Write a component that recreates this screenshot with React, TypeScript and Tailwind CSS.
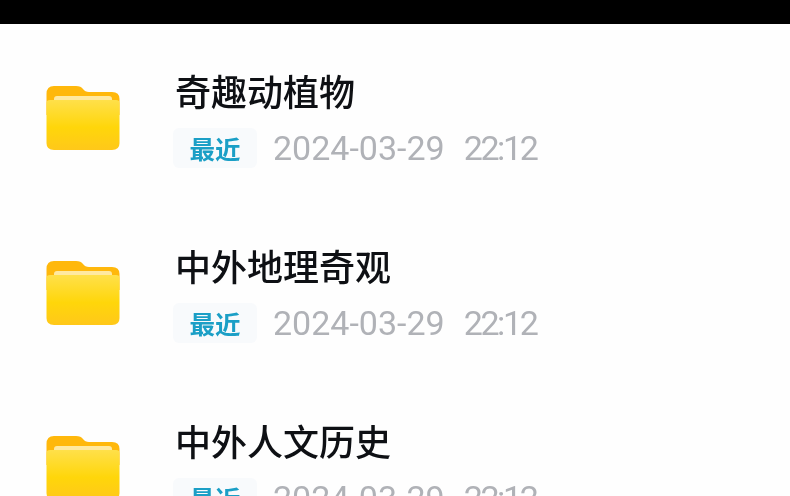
const Folder = ({ id }: { id: string }) => (
  <svg width="74" height="66" viewBox="0 0 74 66" className="shrink-0">
    <defs>
      <linearGradient id={id} x1="0" y1="0" x2="0" y2="1">
        <stop offset="0" stopColor="#ffe04a" />
        <stop offset="0.55" stopColor="#ffd60a" />
        <stop offset="1" stopColor="#ffc81a" />
      </linearGradient>
    </defs>
    <path d="M0.5 9 Q0.5 1 8 1 H30 Q35 1 37 4 Q39 7 43 7 H66 Q73.5 7 73.5 14 V30 H0.5 Z" fill="#ffb80c" />
    <rect x="8" y="11" width="58" height="8" rx="3" fill="#ffe9a0" />
    <path d="M0.5 18 Q0.5 15 4 15 H70 Q73.5 15 73.5 18 V58 Q73.5 65 66 65 H8 Q0.5 65 0.5 58 Z" fill={`url(#${id})`} />
  </svg>
);

const rows = ["奇趣动植物", "中外地理奇观", "中外人文历史"];

export default function App() {
  return (
    <div className="w-[790px] h-[496px] overflow-hidden bg-[#fefefe] flex flex-col" style={{ fontFamily: '"Noto Sans CJK SC", sans-serif' }}>
      <div className="h-[24px] shrink-0 bg-black" />
      <div className="flex flex-col gap-[75px] pt-[42px] blur-[0.6px]">
        {rows.map((title, i) => (
          <div key={title} className="flex h-[100px] shrink-0">
            <div className="pl-[46px] w-[175px] pt-[19px] shrink-0">
              <Folder id={`folder-${i}`} />
            </div>
            <div className="flex flex-col">
              <div className="h-[60px] shrink-0 -mt-[2px] text-[36px] leading-[52px] font-medium text-[#0e1014] whitespace-nowrap">{title}</div>
              <div className="flex items-center h-[40px] shrink-0 mt-[4px]">
                <div className="w-[84px] h-[40px] -ml-[2px] rounded-[6px] bg-[#f8fafc] flex items-center justify-center text-[25.5px] font-bold text-[#1b9fc6]">最近</div>
                <div className="ml-[16px] text-[34px] text-[#b0b2b7] whitespace-nowrap flex gap-[19px]" style={{ fontFamily: 'Roboto, sans-serif' }}>
                  <span>2024-03-29</span>
                  <span className="tracking-[-2.4px]">22:12</span>
                </div>
              </div>
            </div>
          </div>
        ))}
      </div>
    </div>
  );
}
